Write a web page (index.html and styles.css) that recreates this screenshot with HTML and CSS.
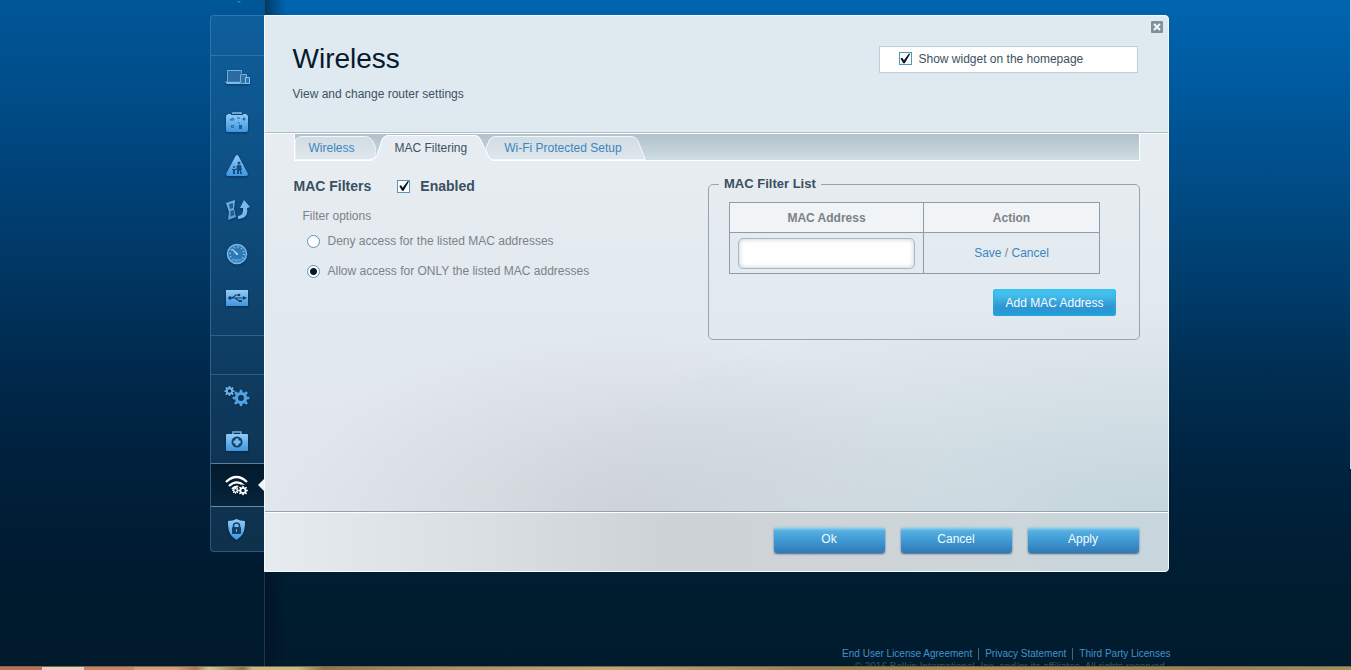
FILE: index.html
```html
<!DOCTYPE html>
<html lang="en">
<head>
<meta charset="utf-8">
<meta name="viewport" content="width=device-width, initial-scale=1">
<title>Wireless</title>
<link rel="stylesheet" href="styles.css">
</head>
<body>
<svg class="defs" width="0" height="0" aria-hidden="true">
  <defs>
    <linearGradient id="ice" x1="0" y1="0" x2="0" y2="1"><stop offset="0" stop-color="#92cbf5"/><stop offset="1" stop-color="#3f96df"/></linearGradient>
    <linearGradient id="film" x1="0" y1="0" x2="0" y2="1"><stop offset="0" stop-color="#71b4e4"/><stop offset="1" stop-color="#5b9fd2"/></linearGradient>
    <linearGradient id="tabFill" x1="0" y1="0" x2="0" y2="1"><stop offset="0" stop-color="#d0dce3"/><stop offset="1" stop-color="#dfe7ec"/></linearGradient>
    <path id="cog" fill-rule="evenodd" d="M-1.500-11h3l.6 3.400 2 .800 2.800-2 2.200 2.200-2 2.800.8 2L11-1.500v3l-3.100.5-.8 2 2 2.800-2.200 2.200-2.800-2-2 .8-.6 3.200h-3l-.6-3.200-2-.8-2.800 2-2.200-2.200 2-2.800-.8-2-3.100-.5v-3l3.100-.3.800-2-2-2.800 2.200-2.200 2.800 2 2-.8zM0-3.800a3.800 3.800 0 1 0 0 7.600 3.800 3.800 0 0 0 0-7.600z"/>
  </defs>
</svg>
<div class="page">
  <div class="layout">
    <nav class="rail" aria-label="Router menu">
      <div class="rail-top"><svg width="24" height="3" viewBox="0 0 24 3"><path d="M12 0h4l-2 2z" fill="#3d80b6"/></svg></div>
      <div class="rail-box">
        <div class="rail-head"></div>
        <div class="rail-group apps">
          <a href="#devices" aria-label="Device list"><svg width="28" height="28" viewBox="0 0 28 28"><path d="M18.500 9.500v-3h-14v11" fill="none" stroke="#71b2e2"/><path d="M5 7h13v3h-1v7H5z" fill="#2b6ba0"/><path d="M2 17.500h15v2.500H4z" fill="#79bdf0"/><path d="M17.500 10.500h6v9h-6z" fill="#2f73a9" stroke="#71b2e2"/><path d="M22.500 13.500h4v6h-4z" fill="#2f73a9" stroke="#8ac7f3"/></svg></a>
          <a href="#guest" aria-label="Guest access"><svg width="28" height="28" viewBox="0 0 28 28"><path d="M10 6V5h8v1" fill="none" stroke="#83c2ef" stroke-width="1.500"/><path d="M5 6h3v1h12V6h3l2 2v14q0 2-2 2H5q-2 0-2-2V8z" fill="url(#ice)"/><path d="M7 12l3-2 1 2zM14 10h3M15 14l2 2M20 10l2 2M8.500 17.500h2v2h-2z" fill="none" stroke="#246ba5"/><circle cx="21" cy="11" r="1.500" fill="#246ba5"/><path d="M16 17h3v4h-3z" fill="#1d5f98"/></svg></a>
          <a href="#parental" aria-label="Parental controls"><svg width="28" height="28" viewBox="0 0 28 28"><path d="M14 3q1 0 2 2l9 17q0 2-2 2H5q-2 0-2-2l9-17q1-2 2-2z" fill="url(#ice)"/><g fill="#164e80"><circle cx="16" cy="11" r="1.500"/><path d="M14 13h4l1 5h-1l1 4h-2v-3h-1v3h-2v-4h-1z"/><circle cx="11" cy="15" r="1"/><path d="M9 17h4v1h-1v4h-2v-4H9z"/></g></svg></a>
          <a href="#media" aria-label="Media prioritization"><svg width="28" height="28" viewBox="0 0 28 28"><path d="M3 7l9-3-1 9 2 8-8 3 1-8z" fill="url(#film)"/><path d="M6 8l4-1v5l-3 1zM7.500 15l3-1 1 5-4 1.500z" fill="#205d91"/><path d="M15 23v-3q6-1 5-8h-3l4-8 6 7-3 1q2 10-9 11z" fill="#78bbeb"/></svg></a>
          <a href="#speed" aria-label="Speed test"><svg width="28" height="28" viewBox="0 0 28 28"><circle cx="14" cy="14" r="9.500" fill="#2f79b3" stroke="#77b9e8" stroke-width="1.500"/><circle cx="14" cy="14" r="7" fill="none" stroke="#88c7f2" stroke-width="2" stroke-dasharray="1 2.700"/><path d="M9 9l6 5-1 1z" stroke="#a3d5f8" fill="#a3d5f8"/><path d="M8 19a8 8 0 0 0 12 0z" fill="#4b97cf"/></svg></a>
          <a href="#usb" aria-label="USB storage"><svg width="28" height="28" viewBox="0 0 28 28"><rect x="3" y="6" width="22" height="16" fill="url(#ice)"/><g fill="none" stroke="#123f68" stroke-width="1.200"><path d="M6 14h16M9 14l4-3h3M12 14l4 3h2"/></g><g fill="#123f68"><circle cx="7" cy="14" r="1.800"/><path d="M20 12l4 2-4 2z"/><circle cx="16" cy="11" r="1.300"/><path d="M16 16h3v2h-3z"/></g></svg></a>
        </div>
        <div class="rail-head lower"></div>
        <div class="rail-group settings">
          <a href="#connectivity" aria-label="Connectivity"><svg width="28" height="28" viewBox="0 0 28 28"><use href="#cog" transform="translate(6.500 8) scale(.46)" fill="#70b5ea"/><use href="#cog" transform="translate(18 15) scale(.76)" fill="#51a2e4"/></svg></a>
          <a href="#troubleshooting" aria-label="Troubleshooting"><svg width="28" height="28" viewBox="0 0 28 28"><path d="M10 8V5h8v3" fill="none" stroke="#6fb4e8" stroke-width="1.500"/><rect x="3" y="7" width="22" height="17" rx="1" fill="url(#ice)"/><circle cx="14" cy="15" r="5.500" fill="#123f68"/><path d="M12.500 11.500h3v2h2v3h-2v2h-3v-2h-2v-3h2z" fill="#79bcf0"/></svg></a>
          <a class="current" href="#wireless" aria-label="Wireless" aria-current="page"><svg width="28" height="28" viewBox="0 0 28 28"><g fill="none" stroke="#fff" stroke-width="2.200"><path d="M3 11q10.500-10 21 0M6 15q7.500-7 15-.500M9 18q4.500-4 8-1"/></g><circle cx="19.500" cy="19" r="5.500" fill="#041d30"/><use href="#cog" transform="translate(12.500 19.500) scale(.3)" fill="#fff"/><use href="#cog" transform="translate(20 19.500) scale(.44)" fill="#fff"/></svg></a>
          <a href="#security" aria-label="Security"><svg width="28" height="28" viewBox="0 0 28 28"><path d="M5 6q5 0 8.500-2Q17 6 22 6c0 9-1 14-8.500 19C6 20 5 15 5 6z" fill="url(#ice)"/><path d="M10.500 14v-3q0-3 3-3t3 3v3" fill="none" stroke="#123f68" stroke-width="1.500"/><rect x="9" y="12" width="9" height="7" rx="1" fill="#123f68"/><path d="M13 14h1v3h-1z" fill="#65afe8"/></svg></a>
        </div>
      </div>
    </nav>
    <main class="column">
      <section class="panel">
        <button class="close" type="button" aria-label="Close"><svg width="12" height="12" viewBox="0 0 12 12"><path d="M3 3l6 6M9 3L3 9" stroke="#f4f8fa" stroke-width="2"/></svg></button>
        <header class="panel-head">
          <div>
            <h1>Wireless</h1>
            <p>View and change router settings</p>
          </div>
          <label class="widget"><input class="tick" type="checkbox" checked>Show widget on the homepage</label>
        </header>
        <div class="panel-body">
          <div class="tabs">
            <a href="#basic"><svg viewBox="0 0 82 26" preserveAspectRatio="none"><path d="M0 25.500V8Q1 2.500 8 2.500H70Q77 2.500 79 8L82 14V25.500z" fill="url(#tabFill)" stroke="#f3f8fa"/></svg><span>Wireless</span></a>
            <a class="active" href="#mac" aria-current="true"><svg viewBox="0 0 122 27" preserveAspectRatio="none"><path d="M0 27Q5 26 7 22L12 6Q14 1.500 18 1.500H104Q108 1.500 110 6L117 22Q119 26 122 27z" fill="#e6ecf0"/><path d="M0 25.500Q5 25 7 21L12 6Q14 1.500 18 1.500H104Q108 1.500 110 6L117 21Q119 25.500 122 25.500" fill="none" stroke="#fff"/></svg><span>MAC Filtering</span></a>
            <a href="#wps"><svg viewBox="0 0 160 26" preserveAspectRatio="none"><path d="M0 25.500V14L3 7Q5 2.500 10 2.500H145Q151 2.500 153 8L160 25.500z" fill="url(#tabFill)" stroke="#f3f8fa"/></svg><span>Wi-Fi Protected Setup</span></a>
          </div>
          <form class="content">
            <div class="filters">
              <div class="filters-title">
                <h2>MAC Filters</h2>
                <label><input class="tick" type="checkbox" checked>Enabled</label>
              </div>
              <p>Filter options</p>
              <label class="option"><input class="dot" type="radio" name="mode">Deny access for the listed MAC addresses</label>
              <label class="option"><input class="dot" type="radio" name="mode" checked>Allow access for ONLY the listed MAC addresses</label>
            </div>
            <fieldset class="list">
              <legend>MAC Filter List</legend>
              <table>
                <thead><tr><th>MAC Address</th><th class="action">Action</th></tr></thead>
                <tbody><tr><td><input class="mac" type="text" aria-label="MAC Address"></td><td><a href="#save">Save</a> / <a href="#cancel">Cancel</a></td></tr></tbody>
              </table>
              <div class="add-row"><button class="add" type="button">Add MAC Address</button></div>
            </fieldset>
          </form>
        </div>
        <footer class="panel-foot">
          <button type="button">Ok</button>
          <button type="button">Cancel</button>
          <button type="button">Apply</button>
        </footer>
      </section>
      <footer class="legal">
        <ul>
          <li><a href="#eula">End User License Agreement</a></li>
          <li><a href="#privacy">Privacy Statement</a></li>
          <li><a href="#licenses">Third Party Licenses</a></li>
        </ul>
        <p>© 2016 Belkin International, Inc. and/or its affiliates. All rights reserved.</p>
      </footer>
    </main>
  </div>
  <div class="desktop-strip"></div>
</div>
</body>
</html>
```
FILE: styles.css
```css
* { box-sizing: border-box; }
body {
  margin: 0;
  font: 12px/16px "Liberation Sans", Arial, sans-serif;
  color: #3d5163;
}
h1, h2, p, ul { margin: 0; padding: 0; }
a { color: #3b86c0; text-decoration: none; }
button, input { font: inherit; }
.defs { position: absolute; }
.page {
  position: relative;
  height: 100vh;
  overflow: hidden;
  background: linear-gradient(#0065af 0, #005ba0 12%, #004f8c 24%, #003f70 40%, #002e52 56%, #002340 70%, #001d31 86%, #001b2c 100%);
}
.page::after {
  content: "";
  position: absolute;
  top: 0;
  right: 0;
  width: 1px;
  height: 70%;
  background: #d6dde2;
}
.layout {
  display: flex;
  max-width: 992px;
  margin: 0 auto;
  padding: 0 1px 0 30px;
}
.rail {
  position: relative;
  flex: 0 0 55px;
  height: 100vh;
  border-right: 1px solid rgba(120, 160, 195, .5);
}
.rail::before {
  content: "";
  position: absolute;
  top: 0;
  bottom: 0;
  right: 0;
  width: 100vw;
  background: rgba(0, 20, 40, .17);
}
.rail::after {
  content: "";
  position: absolute;
  top: 0;
  bottom: 0;
  left: 100%;
  width: 22px;
  background: linear-gradient(90deg, rgba(0, 14, 30, .5), rgba(0, 14, 30, 0));
}
.rail-top { position: relative; height: 15px; text-align: center; line-height: 0; }
.rail-box {
  position: relative;
  border: 1px solid rgba(110, 160, 200, .35);
  border-right: 0;
  border-radius: 4px 0 0 4px;
  background: rgba(70, 135, 180, .2);
  overflow: hidden;
}
.rail-head { height: 40px; border-bottom: 1px solid rgba(110, 160, 200, .35); }
.rail-head.lower { height: 39px; }
.rail-group a {
  display: flex;
  align-items: center;
  justify-content: center;
  height: 44px;
}
.rail-group svg { filter: drop-shadow(0 1px 1px rgba(0, 20, 45, .5)); }
.apps { height: 280px; padding: 0 0 16px; border-bottom: 1px solid rgba(110, 160, 200, .35); }
.rail-group .current {
  position: relative;
  background: linear-gradient(#031a2b, #06243c);
  border-top: 1px solid #5c7f99;
  border-bottom: 1px solid #6b8ba3;
}
.current::after {
  content: "";
  position: absolute;
  right: 0;
  top: 15px;
  border: 6px solid transparent;
  border-left-width: 0;
  border-right-color: #edf3f6;
}
.column { position: relative; z-index: 1; flex: 1; min-width: 0; padding-top: 15px; margin-left: -1px; }
.panel {
  position: relative;
  margin-right: 2px;
  border: 1px solid #f7fbfd;
  border-radius: 0 4px 4px 0;
  overflow: hidden;
  background: #dfe9f0;
}
.close {
  position: absolute;
  top: 5px;
  right: 5px;
  width: 12px;
  height: 12px;
  padding: 0;
  border: 0;
  border-radius: 1px;
  background: #7f929c;
}
.close svg { display: block; }
.panel-head {
  display: flex;
  justify-content: space-between;
  align-items: flex-start;
  min-height: 117px;
  padding: 30px 30px 0 28px;
  border-bottom: 1px solid #afbec8;
}
h1 { font-size: 28px; line-height: 26px; font-weight: 400; color: #061a2b; }
.panel-head p { margin-top: 14px; }
.widget {
  display: flex;
  align-items: center;
  gap: 7px;
  width: 259px;
  height: 27px;
  padding: 0 0 2px 19px;
  border: 1px solid #bccfdb;
  background: #fdfefd;
}
.tick, .dot {
  appearance: none;
  position: relative;
  flex: none;
  width: 13px;
  height: 13px;
  margin: 0;
  border: 1px solid #5b95b4;
  background: #fdfeff;
}
.tick:checked::after {
  content: "";
  position: absolute;
  inset: 0;
  background: #071625;
  clip-path: polygon(9% 50%, 26% 44%, 40% 66%, 84% 6%, 98% 6%, 48% 94%, 34% 94%);
}
.dot { border-radius: 50%; }
.dot:checked { background: radial-gradient(circle, #04192a 3px, #fdfeff 4px); }
.panel-body {
  min-height: 379px;
  padding: 0 28px 22px 29px;
  border-top: 1px solid #fff;
  border-bottom: 1px solid #91a4ae;
  background:
    radial-gradient(ellipse 38% 48% at 40% 100%, rgba(199, 204, 209, .7), rgba(205, 210, 217, 0)),
    radial-gradient(ellipse 75% 55% at 100% 100%, rgba(187, 208, 216, .75), rgba(200, 216, 224, 0)),
    linear-gradient(#e7edf1 0, #e3eaef 45%, #e0e6eb 100%);
}
.tabs {
  display: flex;
  height: 27px;
  border: solid #fff;
  border-width: 0 1px 1px;
  background: linear-gradient(#b0c1cb, #cfdde4);
}
.tabs a { position: relative; padding: 6px 21px 0 14px; white-space: nowrap; }
.tabs svg { position: absolute; left: 0; top: 0; width: 100%; height: 26px; }
.tabs span { position: relative; }
.tabs .active { z-index: 1; padding: 6px 19px 0; color: #3d5163; }
.tabs .active svg { left: -6px; width: calc(100% + 12px); height: 27px; }
.tabs a:last-child { padding: 6px 24px 0 18px; }
.content {
  display: grid;
  grid-template-columns: 49fr 51fr;
  padding-top: 15px;
}
.filters { color: #7c8288; }
.filters-title { display: flex; align-items: center; gap: 26px; font-size: 14px; font-weight: 700; color: #3a4f60; }
h2 { font-size: 14px; line-height: 20px; }
.filters-title label, .option { display: flex; align-items: center; }
.filters-title label { gap: 10px; }
.filters p { margin: 12px 0 9px 9px; }
.option { gap: 8px; margin: 0 0 14px 13px; }
.list {
  min-width: 0;
  margin: 0;
  padding: 10px 23px 23px 20px;
  border: 1px solid #96a3b1;
  border-radius: 5px;
}
.list legend { margin-left: -10px; padding: 0 5px; font-size: 13px; line-height: 16px; font-weight: 700; color: #3a4f60; }
table { width: 371px; max-width: 100%; border-collapse: collapse; table-layout: fixed; color: #7c8288; }
th, td { border: 1px solid #8f9cab; padding: 0 8px; text-align: center; }
th { height: 30px; background: #f0f4f7; }
.action { width: 176px; }
td { height: 41px; }
.mac {
  display: block;
  width: 100%;
  height: 31px;
  padding: 0 8px;
  border: 1px solid #a8b8c2;
  border-radius: 5px;
  background: #fff;
  box-shadow: inset 0 0 5px rgba(100, 120, 135, .4);
}
.add-row { display: flex; justify-content: flex-end; margin-top: 15px; }
.add {
  height: 27px;
  padding: 0 12px;
  border: 0;
  border-radius: 3px;
  color: #f5fbff;
  background: linear-gradient(#45cbf4 0, #43b7e7 30%, #3095d2 65%, #219dd4 100%);
  box-shadow: inset 0 0 4px #22b2e5;
}
.panel-foot {
  display: flex;
  justify-content: flex-end;
  gap: 16px;
  padding: 14px 29px 18px;
  border-top: 1px solid #fff;
  background: linear-gradient(90deg, #e5ebef 0, #d9dee2 25%, #cdd2d6 45%, #ced5d9 75%, #c7d6dd 100%);
}
.panel-foot button {
  width: 111px;
  height: 26px;
  padding: 0 0 2px;
  border: 0;
  border-radius: 3px;
  color: #f5fbff;
  background: linear-gradient(#a5d8ef 0, #55afe1 15%, #3d97d3 55%, #3279b4 100%);
  box-shadow: 0 1px 2px rgba(30, 70, 110, .8);
}
.legal { padding-top: 76px; font-size: 10px; text-align: right; white-space: nowrap; }
.legal ul { display: flex; justify-content: flex-end; list-style: none; line-height: 12px; }
.legal li + li { margin-left: 6px; padding-left: 6px; border-left: 1px solid #38698a; }
.legal a { color: #4392cb; }
.legal p { margin: 1px 3px 0 0; line-height: 12px; color: #2d5269; }
.desktop-strip {
  position: absolute;
  z-index: 2;
  bottom: 0;
  width: 100%;
  height: 4px;
  border-top: 1px solid #77694b;
  background: linear-gradient(90deg, #bd7057 0 3.1%, #ead0c3 3.1% 6.2%, #c98467 6.2% 9.9%, #d89c82 9.9% 13%, #a67a58 14.500%, #d0c69a 15.500%, #8c7550 18%, #c6bd83 18.700% 22%, #927447 24%, #a48b5f 30%, #c0a877 45%, #988158 60%, #b08b50 72%, #9b8256 90%, #9c945d 100%);
}
```
